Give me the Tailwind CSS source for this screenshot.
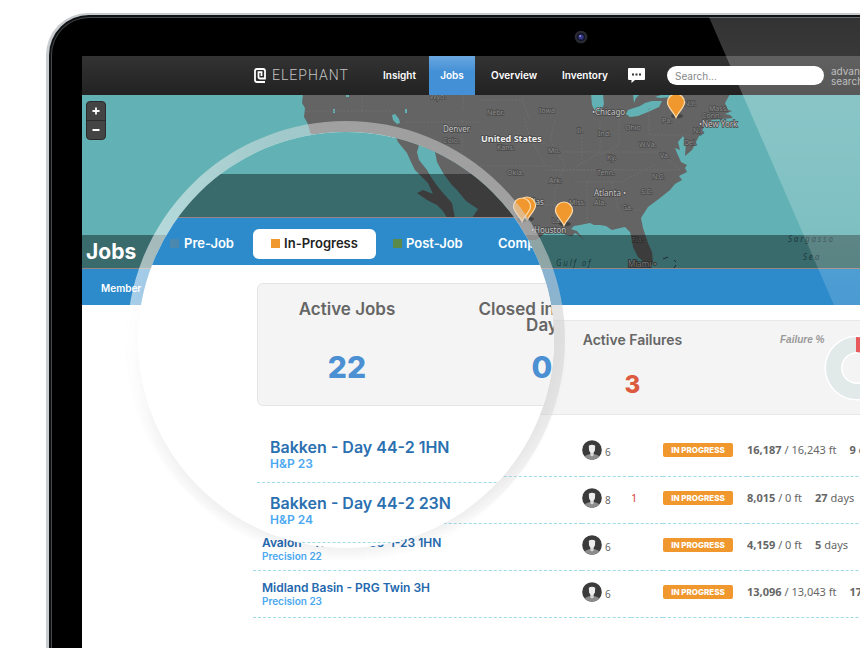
<!DOCTYPE html>
<html lang="en">
<head>
<meta charset="utf-8">
<meta name="viewport" content="width=device-width, initial-scale=1">
<title>Elephant – Jobs</title>
<script src="https://cdn.jsdelivr.net/npm/@tailwindcss/browser@4"></script>
</head>
<body class="bg-white font-['Inter','Liberation_Sans',sans-serif] text-[#666]">
<svg class="absolute h-0 w-0" aria-hidden="true">
  <defs>
    <symbol id="avatar" viewBox="0 0 20 20">
      <circle cx="10" cy="10" r="9.800" fill="#3b3b3b"/>
      <path d="M2.800 16.600C4 14.800 6.200 14.300 10 14.300s6 .5 7.200 2.300A9.800 9.800 0 0 1 2.800 16.600z" fill="#8c8c8c"/>
      <path d="M8.300 11h3.400v4a1.700 1.200 0 0 1-3.400 0z" fill="#d5d5d5"/>
      <path d="M6.800 5.800Q10 3.800 13.200 5.800L12.900 10.500Q12 13 10 13T7.100 10.500z" fill="#ededed"/>
    </symbol>
    <symbol id="pin" viewBox="0 0 20 28">
      <ellipse cx="11" cy="23" rx="6" ry="2.500" fill="#000" opacity=".3"/>
      <path d="M10 24.500C8 19 1.500 14.500 1.500 9.500a8.500 8.500 0 0 1 17 0C18.500 14.500 12 19 10 24.500z" fill="#f0982d" stroke="#fbdcae" stroke-width="1.200"/>
    </symbol>
  </defs>
</svg>

<div class="relative h-screen overflow-hidden">
  <!-- Laptop shell -->
  <div class="ml-[46px] mt-[13px] h-full rounded-tl-[42px] bg-[#c9cccf] pl-[3px] pt-[2px]">
   <div class="h-full rounded-tl-[40px] bg-[#101214] pl-[2px] pt-[2px]">
    <div class="h-full rounded-tl-[38px] border-l border-t border-[#44484b] bg-black pl-[30px]">
      <div class="flex h-[38px] justify-center pt-3">
        <svg class="ml-[220px] h-[14px] w-[14px]" viewBox="0 0 14 14" aria-hidden="true"><circle cx="7" cy="7" r="6.300" fill="#2b2c33"/><circle cx="7" cy="7" r="4.300" fill="#14152a"/><circle cx="7" cy="7" r="2.600" fill="#34368a"/><circle cx="6.200" cy="6" r="1" fill="#8e93d8"/></svg>
      </div>

      <!-- Screen -->
      <div class="h-full overflow-hidden bg-white">
        <header class="flex h-[39px] items-center bg-linear-to-b from-[#333] to-[#222] pl-[172px]">
          <a href="#" class="flex w-[117px] shrink-0 items-center gap-[6px]">
            <svg class="h-[15px] w-[12px]" viewBox="0 0 12 15" fill="none" stroke="#fff" stroke-width="1.800" aria-hidden="true"><path d="M11 14H3Q1 14 1 12V3Q1 1 3 1H9Q11 1 11 3V10.500H6Q4.500 10.500 4.500 9V4.200H7.500V8"/></svg>
            <span class="font-['Roboto',sans-serif] text-[14px] font-light tracking-[1px] text-[#c4c4c4]">ELEPHANT</span>
          </a>
          <nav class="flex h-full shrink-0 items-center text-[10px] font-semibold text-white">
            <a href="#" class="w-[58px] pl-3">Insight</a>
            <a href="#" class="flex h-full w-[46px] items-center justify-center bg-linear-to-b from-[#6aa7e0] to-[#4490d6] to-40%">Jobs</a>
            <a href="#" class="ml-1 w-[71px] pl-3">Overview</a>
            <a href="#" class="w-[78px] pl-3">Inventory</a>
          </nav>
          <button type="button" aria-label="Messages" class="mr-[22px] shrink-0">
            <svg class="h-[15px] w-[17px]" viewBox="0 0 17 15" aria-hidden="true"><path d="M1 0H16Q17 0 17 1V11Q17 12 16 12H7L3.500 15V12H1Q0 12 0 11V1Q0 0 1 0z" fill="#fff"/><path d="M4 5.500h2v2H4zM7.500 5.500h2v2h-2zM11 5.500h2v2h-2z" fill="#333"/></svg>
          </button>
          <input type="search" aria-label="Search" placeholder="Search..." class="h-[19px] w-[157px] shrink-0 rounded-full bg-white px-2 text-[10px] text-[#555] placeholder:text-[#888]">
          <a href="#" class="ml-[7px] text-[10px] leading-[10px] text-[#aaa]">advanced<br>search</a>
        </header>

        <!-- Map -->
        <section class="relative h-[174px] overflow-hidden border-b border-[#9a8583] bg-[#62b2b5]" aria-label="Job map">
          <svg class="block h-[174px] w-[778px] font-['Noto_Sans','Open_Sans',sans-serif]" viewBox="82 95 778 174">
            <path d="M303 94L302 103L305 108L304 117L308 124L310 132L320 150L400 240L536 240L545 233L560 232L566 235L572 236L575 233L580 236L584 240L577 231L571 229L574 226L580 225L590 223L594 225L600 225L606 226L612 230L620 228L625 227L630 232L632 240L633 247L638 257L645 263L650 269L653 262L652 252L648 243L643 228L641 218L648 207L660 198L670 190L675 184L682 180L679 176L687 172L685 168L687 165L681 162L677 153L675 148L680 150L678 142L683 136L686 142L685 156L692 150L697 140L702 130L705 125L712 120L733 118L730 115L725 114L732 111L728 110L725 103L730 94z" fill="#646464"/>
            <g fill="#62b2b5"><path d="M591 94L592 105L595 111L601 111L604 104L603 94zM626 114L628 110L640 106L645 103L652 101L662 101L659 107L648 112L638 116L630 117zM633 94L634 103L636 98L640 94zM655 97L664 94H678L674 97L660 98z"/><path d="M392 115L395 114L399 119L400 123L397 124L393 120zM346 95h3v2h-3zM333 109h2v4h-2zM405 109h2v4h-2z"/></g>
            <g fill="none" stroke="#757575" stroke-width=".6" stroke-dasharray="2 1.500"><path d="M305 111H392M362 95V111M406 122H480M463 95V110M480 100H522L530 120M462 120V160M480 143H545M524 118L531 140L545 165M480 166H555M545 170H620M555 120L550 140L565 165L555 190V235M582 130V165M600 120V152L575 168M619 115V145L600 155M649 108V135H690M552 152H660L680 170M555 170H680M587 182V222M612 182L618 210H640M575 182H620L655 165M540 205H560"/></g>
            <g fill="#8c8c8c" stroke="#4a4a4a" stroke-width="1.500" paint-order="stroke" font-size="7">
              <text x="430" y="99">Wyo.</text><text x="487" y="115">Nebr.</text><text x="539" y="113">Iowa</text><text x="443" y="143">Colo.</text><text x="497" y="150">Kans.</text><text x="548" y="153">Mo.</text><text x="507" y="175">Okla.</text><text x="549" y="183">Ark.</text><text x="577" y="133">Il.</text><text x="598" y="136">Ind.</text><text x="625" y="130">Ohio</text><text x="607" y="160">Ky.</text><text x="597" y="175">Tenn.</text><text x="569" y="205">Miss.</text><text x="594" y="205">Ala.</text><text x="622" y="210">Ga.</text><text x="641" y="194">S.C.</text><text x="652" y="179">N.C.</text><text x="660" y="158">Va.</text><text x="639" y="147">W.Va.</text><text x="662" y="123">Pa.</text><text x="684" y="106">N.Y.</text><text x="693" y="133">N.J.</text><text x="684" y="145">Del.</text><text x="709" y="111">Mass.</text><text x="702" y="118">Conn.</text><text x="552" y="223">La.</text><text x="632" y="242">Fla.</text>
            </g>
            <g fill="#c4c4c4" stroke="#484848" stroke-width="1.500" paint-order="stroke" font-size="8">
              <text x="443" y="132">Denver</text><text x="592" y="115">•Chicago</text><text x="699" y="127">•New York</text><text x="594" y="196">Atlanta •</text><text x="521" y="205">Dallas</text><text x="531" y="233">•Houston</text><text x="628" y="267">Miami •</text>
            </g>
            <text x="481" y="142" font-size="9" font-weight="700" fill="#eee" stroke="#444" stroke-width="1.500" paint-order="stroke">United States</text>
            <g fill="#2c6367" font-size="8" font-style="italic" letter-spacing="1.800"><text x="788" y="242">Sargasso</text><text x="803" y="260">Sea</text><text x="556" y="266">Gulf of</text></g>
            <path d="M663 259l5-2M674 260l2 2M676 265l-2 3" stroke="#345" stroke-width="1"/>
            <use href="#pin" x="666" y="93" width="20" height="28"/>
            <use href="#pin" x="517" y="196" width="20" height="28"/>
            <use href="#pin" x="512" y="197" width="20" height="28"/>
            <use href="#pin" x="554" y="201" width="20" height="28"/>
          </svg>
          <div class="absolute left-1 top-[6px] flex w-[20px] flex-col overflow-hidden rounded-sm border border-[#2b2b2b] bg-[#444]">
            <button type="button" aria-label="Zoom in" class="flex h-[19px] items-center justify-center border-b border-[#2b2b2b]"><svg class="h-2 w-2" viewBox="0 0 8 8" aria-hidden="true"><path d="M4 .5v7M.5 4h7" stroke="#fff" stroke-width="1.800"/></svg></button>
            <button type="button" aria-label="Zoom out" class="flex h-[18px] items-center justify-center"><svg class="h-2 w-2" viewBox="0 0 8 8" aria-hidden="true"><path d="M.5 4h7" stroke="#fff" stroke-width="2"/></svg></button>
          </div>
          <div class="absolute inset-x-0 bottom-0 flex h-[33px] items-center bg-black/40 pl-1">
            <h1 class="text-[21px] font-bold leading-none text-white">Jobs</h1>
          </div>
        </section>

        <nav class="flex h-[36px] items-center bg-[#2d8bcb] pl-[19px] pt-[2px] text-[10px] font-semibold text-white"><a href="#">Member</a></nav>

        <!-- Summary -->
        <section class="ml-[171px] mt-[15px] flex h-[95px] border-y border-[#e8e8e8] bg-[#f4f4f4] pl-[328px]">
          <div class="w-[103px] shrink-0 pt-[11px] text-center">
            <h2 class="whitespace-nowrap text-[14px] font-semibold leading-4">Active Failures</h2>
            <p class="mt-6 text-[24px] font-extrabold leading-[26px] text-[#dc5a3e]">3</p>
          </div>
          <div class="ml-[96px] flex shrink-0 items-start">
            <p class="pt-[14px] font-['Liberation_Sans',sans-serif] text-[10px] font-bold italic leading-[10px] text-[#999]">Failure %</p>
            <svg class="mt-[14px] h-[66px] w-[66px]" viewBox="0 0 66 66" role="img" aria-label="Failure rate">
              <circle cx="33" cy="33" r="23.500" fill="none" stroke="#fff" stroke-width="18"/>
              <circle cx="33" cy="33" r="23.500" fill="none" stroke="#e2e9e9" stroke-width="15"/>
              <path d="M32 2A31 31 0 0 1 48 6L41 20A15 15 0 0 0 32 17z" fill="#e8595b"/>
            </svg>
          </div>
        </section>

        <!-- Job list -->
        <table class="ml-[171px] mt-[14px] w-[640px] table-fixed border-collapse text-left font-['Noto_Sans',sans-serif] text-[11px] leading-4">
          <colgroup><col class="w-[329px]"><col class="w-[49px]"><col class="w-[32px]"><col class="w-[84px]"><col></colgroup>
          <tbody>
            <tr class="h-[47px] border-b border-dashed border-[#9fdbe9]">
              <td></td>
              <td class="pb-1"><div class="flex items-center gap-[3px]"><svg class="h-5 w-5" aria-hidden="true"><use href="#avatar"/></svg><span class="pt-1 text-[10px] leading-4">6</span></div></td>
              <td></td>
              <td class="pb-1"><span class="block w-[70px] rounded-xs bg-[#f0982d] text-center font-['Inter',sans-serif] text-[8px] font-extrabold leading-[14px] text-white">IN PROGRESS</span></td>
              <td class="pb-1"><div class="flex gap-[13px] whitespace-nowrap"><span><b>16,187</b> / 16,243 ft</span><span><b>9</b> days</span></div></td>
            </tr>
            <tr class="h-[47px] border-b border-dashed border-[#9fdbe9]">
              <td></td>
              <td class="pb-1"><div class="flex items-center gap-[3px]"><svg class="h-5 w-5" aria-hidden="true"><use href="#avatar"/></svg><span class="pt-1 text-[10px] leading-4">8</span></div></td>
              <td class="pb-1 text-[#d9483b]">1</td>
              <td class="pb-1"><span class="block w-[70px] rounded-xs bg-[#f0982d] text-center font-['Inter',sans-serif] text-[8px] font-extrabold leading-[14px] text-white">IN PROGRESS</span></td>
              <td class="pb-1"><div class="flex gap-[13px] whitespace-nowrap"><span><b>8,015</b> / 0 ft</span><span><b>27</b> days</span></div></td>
            </tr>
            <tr class="h-[47px] border-b border-dashed border-[#9fdbe9]">
              <td class="pl-[9px] pt-1 font-['Inter',sans-serif]"><a href="#" class="block text-[12px] font-semibold leading-[14px] text-[#2468ae]">Avalon - Thresher 33-1-23 1HN</a><span class="block text-[10px] font-semibold leading-3 text-[#4aa8f0]">Precision 22</span></td>
              <td class="pb-1"><div class="flex items-center gap-[3px]"><svg class="h-5 w-5" aria-hidden="true"><use href="#avatar"/></svg><span class="pt-1 text-[10px] leading-4">6</span></div></td>
              <td></td>
              <td class="pb-1"><span class="block w-[70px] rounded-xs bg-[#f0982d] text-center font-['Inter',sans-serif] text-[8px] font-extrabold leading-[14px] text-white">IN PROGRESS</span></td>
              <td class="pb-1"><div class="flex gap-[13px] whitespace-nowrap"><span><b>4,159</b> / 0 ft</span><span><b>5</b> days</span></div></td>
            </tr>
            <tr class="h-[47px] border-b border-dashed border-[#9fdbe9]">
              <td class="pl-[9px] font-['Inter',sans-serif]"><a href="#" class="block text-[12px] font-semibold leading-[14px] text-[#2468ae]">Midland Basin - PRG Twin 3H</a><span class="block text-[10px] font-semibold leading-3 text-[#4aa8f0]">Precision 23</span></td>
              <td class="pb-1"><div class="flex items-center gap-[3px]"><svg class="h-5 w-5" aria-hidden="true"><use href="#avatar"/></svg><span class="pt-1 text-[10px] leading-4">6</span></div></td>
              <td></td>
              <td class="pb-1"><span class="block w-[70px] rounded-xs bg-[#f0982d] text-center font-['Inter',sans-serif] text-[8px] font-extrabold leading-[14px] text-white">IN PROGRESS</span></td>
              <td class="pb-1"><div class="flex gap-[13px] whitespace-nowrap"><span><b>13,096</b> / 13,043 ft</span><span><b>17</b> days</span></div></td>
            </tr>
          </tbody>
        </table>
      </div>
    </div>
   </div>
  </div>

  <!-- Magnifier -->
  <svg class="pointer-events-none absolute left-[116px] top-[110px] h-[460px] w-[460px]" viewBox="0 0 460 460" aria-hidden="true">
    <defs>
      <linearGradient id="rc" x1="0" x2="1" y1="0" y2="0"><stop offset="0" stop-color="#fff"/><stop offset=".35" stop-color="#dedede"/><stop offset="1" stop-color="#d2d2d2"/></linearGradient>
      <linearGradient id="rf" x1="0" x2="0" y1="0" y2="1"><stop offset="0" stop-color="#fff" stop-opacity=".5"/><stop offset=".5" stop-color="#fff" stop-opacity=".6"/><stop offset=".75" stop-color="#fff" stop-opacity=".3"/><stop offset=".92" stop-color="#fff" stop-opacity="0"/></linearGradient>
      <linearGradient id="sf" x1="0" x2="0" y1="0" y2="1"><stop offset=".35" stop-color="#fff" stop-opacity="0"/><stop offset=".7" stop-color="#fff"/></linearGradient>
      <mask id="rm" maskUnits="userSpaceOnUse" x="0" y="0" width="460" height="460"><rect width="460" height="460" fill="url(#rf)"/></mask>
      <mask id="sm" maskUnits="userSpaceOnUse" x="0" y="0" width="460" height="460"><rect width="460" height="460" fill="url(#sf)"/></mask>
      <radialGradient id="rs" gradientUnits="userSpaceOnUse" cx="230" cy="230" r="222"><stop offset=".93" stop-color="#000" stop-opacity=".06"/><stop offset="1" stop-color="#000" stop-opacity="0"/></radialGradient>
    </defs>
    <circle cx="230" cy="230" r="222" fill="url(#rs)" mask="url(#sm)"/>
    <circle cx="230" cy="230" r="213" fill="none" stroke="url(#rc)" stroke-width="12" mask="url(#rm)"/>
  </svg>
  <section class="absolute left-[138px] top-[132px] h-[416px] w-[416px] overflow-hidden rounded-full bg-white" aria-label="Magnified view">
    <div class="relative h-[86px] overflow-hidden border-b border-[#9a8583] bg-[#62b2b5]">
      <svg class="block h-[86px] w-[416px]" viewBox="138 132 416 86" aria-hidden="true"><path d="M393 131L398 142L407 153L411 162L415 170L428 183L433 194L423 190L417 193L427 200L437 205L443 211L447 218H455L452 203L444 194L438 187L431 177L427 170L419 160L417 152L419 145L435 152L437 162L443 173L451 184L457 190L466 201L478 209L472 218H555V131z" fill="#646464"/></svg>
      <div class="absolute inset-x-0 bottom-0 h-[43px] bg-black/40"></div>
    </div>
    <nav class="flex h-[47px] items-center whitespace-nowrap bg-[#2d8bcb] pl-[32px] pt-1 text-[13px] font-semibold text-white">
      <a href="#" class="flex w-[83px] shrink-0 items-center gap-[5px]"><i class="size-[9px] bg-[#4b88b0]"></i>Pre-Job</a>
      <a href="#" class="flex h-[30px] w-[123px] shrink-0 items-center justify-center gap-1 rounded-md bg-white text-[#222]"><i class="size-[9px] bg-[#f0982d]"></i>In-Progress</a>
      <a href="#" class="ml-[17px] flex w-[105px] shrink-0 items-center gap-1"><i class="size-[9px] bg-[#5a8a4a]"></i>Post-Job</a>
      <a href="#">Completed</a>
    </nav>
    <div class="ml-[119px] mt-[18px] flex h-[123px] w-[400px] rounded-md border border-[#e4e4e4] bg-[#f4f4f4] pt-[17px] text-center">
      <div class="w-[178px] shrink-0">
        <h2 class="h-8 text-[17px] font-semibold leading-4">Active Jobs</h2>
        <p class="mt-4 text-[30px] font-extrabold leading-9 text-[#4a90d2]">22</p>
      </div>
      <div class="w-[212px] shrink-0">
        <h2 class="h-8 text-[17px] font-semibold leading-4">Closed in Same<br>Day</h2>
        <p class="mt-4 text-[30px] font-extrabold leading-9 text-[#4a90d2]">0</p>
      </div>
    </div>
    <ul class="ml-[119px] mt-[21px] w-[300px]">
      <li class="border-b border-dashed border-[#9fdbe9] pb-[10px] pl-[13px] pt-[11px]"><a href="#" class="block text-[16px] font-semibold leading-[18px] text-[#2a70b0]">Bakken - Day 44-2 1HN</a><span class="block text-[12px] font-semibold leading-4 text-[#4aa8f0]">H&amp;P 23</span></li>
      <li class="border-b border-dashed border-[#9fdbe9] pb-[14px] pl-[13px] pt-[11px]"><a href="#" class="block text-[16px] font-semibold leading-[18px] text-[#2a70b0]">Bakken - Day 44-2 23N</a><span class="block text-[12px] font-semibold leading-4 text-[#4aa8f0]">H&amp;P 24</span></li>
    </ul>
  </section>

  <!-- Screen glare -->
  <svg class="pointer-events-none absolute left-[709px] top-[17px] h-[288px] w-[400px]" viewBox="0 0 400 288" aria-hidden="true">
    <defs><linearGradient id="gl" x1="0" x2="0" y1="0" y2="1"><stop offset="0" stop-color="#fff" stop-opacity=".2"/><stop offset=".3" stop-color="#fff" stop-opacity=".25"/><stop offset="1" stop-color="#fff" stop-opacity=".14"/></linearGradient></defs>
    <path d="M0 0H400V288H125z" fill="url(#gl)"/>
  </svg>
</div>
</body>
</html>
